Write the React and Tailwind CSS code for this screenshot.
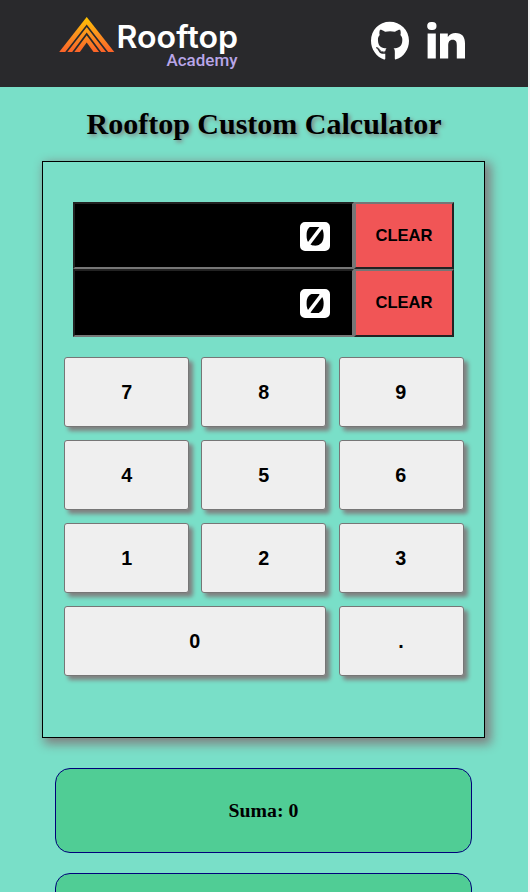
import { FaGithub } from "react-icons/fa";

const keys = ["7", "8", "9", "4", "5", "6", "1", "2", "3", "0", "."];

function Logo() {
  return (
    <svg width="190" height="70" viewBox="0 0 190 70" role="img">
      <defs>
        <linearGradient id="roof" gradientUnits="userSpaceOnUse" x1="0" y1="12" x2="0" y2="47">
          <stop offset="0" stopColor="#ffc400" />
          <stop offset="0.5" stopColor="#fb921f" />
          <stop offset="1" stopColor="#fb6328" />
        </linearGradient>
      </defs>
      <path d="M31.700 12 59.300 47H4.200Z" fill="url(#roof)" />
      <g fill="none" stroke="#29292c" strokeWidth="1.700">
        <path d="M10.500 48 31.700 20.800 52.900 48" />
        <path d="M17.500 48 31.700 29 45.900 48" />
      </g>
      <path d="M24.500 47.500 31.700 37.500 38.900 47.500Z" fill="#29292c" />
      <text x="61.500" y="42.500" textLength="121.500" lengthAdjust="spacingAndGlyphs" fill="white" className="font-['Inter',sans-serif] text-[31px] font-semibold">Rooftop</text>
      <text x="111.500" y="61" textLength="71" lengthAdjust="spacingAndGlyphs" fill="#b9a6e8" className="font-['Roboto',sans-serif] text-[16.500px] font-medium">Academy</text>
    </svg>
  );
}

function LinkedIn() {
  return (
    <svg width="38" height="37" viewBox="0 0 38 37" fill="white">
      <rect x="0.200" y="0" width="9.300" height="8" rx="4" />
      <path d="M0.600 11.500H8.800V36.500H0.600ZM13 11.500H20.800V15C22.500 12 25.200 10.900 28.500 10.900C35.500 10.900 38 15 38 21.500V36.500H29.800V23.500C29.800 20 29 17.800 25.700 17.800C22.300 17.800 21.200 20.200 21.200 23.500V36.500H13Z" />
    </svg>
  );
}

function Display({ tall }) {
  return (
    <div className={`flex ${tall ? "h-[68px]" : "h-[67px]"}`}>
      <div className="flex w-[281px] items-center justify-end border-2 border-t-[#222] border-l-[#222] border-r-[#767676] border-b-[#767676] bg-black pr-[22px] pt-px text-white">
        <span className="flex h-[29px] w-[30px] items-center justify-center overflow-hidden rounded-[5px] border-[5px] border-white">
          <span className="inline-block scale-x-[1.450] font-['Inter',sans-serif] text-[40px] leading-none font-semibold [font-feature-settings:'zero']">0</span>
        </span>
      </div>
      <button className="w-[100px] border-2 border-t-[#767676] border-l-[#767676] border-r-[#222] border-b-[#222] bg-[#f15556] pt-px font-['Liberation_Sans',Arial,sans-serif] text-[16.600px] font-bold text-black">CLEAR</button>
    </div>
  );
}

export default function App() {
  return (
    <div className="h-[892px] overflow-hidden bg-[#f1f1f1] pr-[2px]">
      <div className="flex h-full flex-col bg-[#79dfc8] font-['Liberation_Serif','Times_New_Roman',serif] text-black">
        <header className="flex h-[87px] shrink-0 items-start justify-between bg-[#29292c] pt-[5px] pr-[63px] pl-[55px]">
          <Logo />
          <div className="flex items-start gap-[18px] pt-[16px] text-white">
            <FaGithub className="h-[40px] w-[38px]" preserveAspectRatio="none" />
            <div className="pt-px"><LinkedIn /></div>
          </div>
        </header>
        <h1 className="mt-[17px] h-[40px] shrink-0 text-center text-[30px] leading-[40px] font-bold [text-shadow:2px_2px_4px_#808080]">Rooftop Custom Calculator</h1>
        <main className="mt-[17px] ml-[42px] h-[577px] w-[443px] shrink-0 border border-black pt-[40px] shadow-[4px_4px_10px_2px_gray]">
          <div className="ml-[30px] w-[381px]">
            <Display />
            <Display tall />
          </div>
          <div className="mt-[20px] ml-[21px] grid w-[400px] grid-cols-[124.700px_124.700px_125.400px] gap-x-[12.600px] gap-y-[13px]">
            {keys.map((k) => (
              <button key={k} className={`h-[70px] rounded-[3px] border border-[#767676] bg-[#efefef] font-['Liberation_Sans',Arial,sans-serif] text-[21px] font-bold shadow-[4px_4px_4px_gray] ${k === "0" ? "col-span-2" : ""}`}>
                <span className="inline-block scale-x-[0.940]">{k}</span>
              </button>
            ))}
          </div>
        </main>
        <section className="mt-[30px] ml-[55px] flex w-[417px] shrink-0 flex-col gap-[20px]">
          <div className="flex h-[85px] items-center justify-center rounded-[15px] border border-[#00007a] bg-[#50cd95] pt-px text-[19.800px] font-bold">Suma: 0</div>
          <div className="h-[85px] rounded-[15px] border border-[#00007a] bg-[#50cd95]" />
        </section>
      </div>
    </div>
  );
}
